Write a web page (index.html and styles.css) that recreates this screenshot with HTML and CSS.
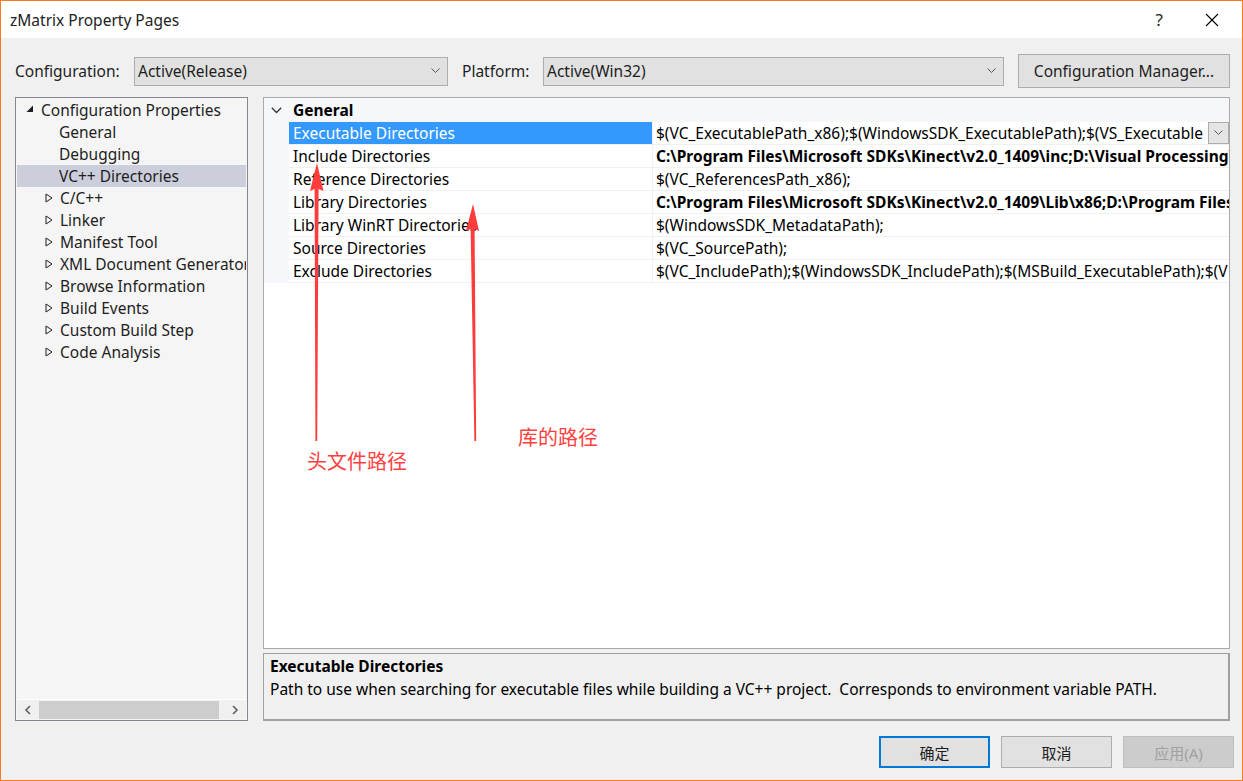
FILE: index.html
```html
<!DOCTYPE html>
<html lang="zh-CN">
<head>
  <meta charset="UTF-8" />
  <title>zMatrix Property Pages</title>
  <link rel="stylesheet" href="styles.css">
</head>
<body>
  <div class="window">

    <!-- 標題列 -->
    <header class="titlebar">
      <span class="title">zMatrix Property Pages</span>
      <span class="help">?</span>
      <svg class="close" width="14" height="14" viewBox="0 0 14 14">
        <path d="M1 1 L13 13 M13 1 L1 13" stroke="#000" stroke-width="1.1" fill="none"/>
      </svg>
    </header>

    <!-- 設定列 -->
    <div class="toolbar">
      <span class="label">Configuration:</span>
      <div class="combo combo-config">
        <span>Active(Release)</span>
        <svg class="chev" width="9" height="6" viewBox="0 0 9 6"><path d="M0.5 0.5 L4.5 4.5 L8.5 0.5" stroke="#555" fill="none"/></svg>
      </div>
      <span class="label label-platform">Platform:</span>
      <div class="combo combo-platform">
        <span>Active(Win32)</span>
        <svg class="chev" width="9" height="6" viewBox="0 0 9 6"><path d="M0.5 0.5 L4.5 4.5 L8.5 0.5" stroke="#555" fill="none"/></svg>
      </div>
      <button class="btn btn-manager">Configuration Manager...</button>
    </div>

    <div class="main">
      <!-- 樹狀清單 -->
      <div class="tree">
        <ul class="tree-list">
          <li class="node root">
            <svg class="tri" width="8" height="8" viewBox="0 0 8 8"><path d="M7 0.5 L7 7 L0.5 7 Z" fill="#1e1e1e"/></svg>
            Configuration Properties
          </li>
          <li class="node leaf">General</li>
          <li class="node leaf">Debugging</li>
          <li class="node leaf selected">VC++ Directories</li>
          <li class="node branch"><svg class="tri" width="8" height="10" viewBox="0 0 8 10"><path d="M1 1 L7 5 L1 9 Z" stroke="#1e1e1e" fill="none"/></svg>C/C++</li>
          <li class="node branch"><svg class="tri" width="8" height="10" viewBox="0 0 8 10"><path d="M1 1 L7 5 L1 9 Z" stroke="#1e1e1e" fill="none"/></svg>Linker</li>
          <li class="node branch"><svg class="tri" width="8" height="10" viewBox="0 0 8 10"><path d="M1 1 L7 5 L1 9 Z" stroke="#1e1e1e" fill="none"/></svg>Manifest Tool</li>
          <li class="node branch"><svg class="tri" width="8" height="10" viewBox="0 0 8 10"><path d="M1 1 L7 5 L1 9 Z" stroke="#1e1e1e" fill="none"/></svg>XML Document Generator</li>
          <li class="node branch"><svg class="tri" width="8" height="10" viewBox="0 0 8 10"><path d="M1 1 L7 5 L1 9 Z" stroke="#1e1e1e" fill="none"/></svg>Browse Information</li>
          <li class="node branch"><svg class="tri" width="8" height="10" viewBox="0 0 8 10"><path d="M1 1 L7 5 L1 9 Z" stroke="#1e1e1e" fill="none"/></svg>Build Events</li>
          <li class="node branch"><svg class="tri" width="8" height="10" viewBox="0 0 8 10"><path d="M1 1 L7 5 L1 9 Z" stroke="#1e1e1e" fill="none"/></svg>Custom Build Step</li>
          <li class="node branch"><svg class="tri" width="8" height="10" viewBox="0 0 8 10"><path d="M1 1 L7 5 L1 9 Z" stroke="#1e1e1e" fill="none"/></svg>Code Analysis</li>
        </ul>
        <div class="hscroll">
          <svg class="sarrow" width="8" height="10" viewBox="0 0 8 10"><path d="M6 1 L2 5 L6 9" stroke="#606060" stroke-width="1.6" fill="none"/></svg>
          <div class="track"><div class="thumb"></div></div>
          <svg class="sarrow" width="8" height="10" viewBox="0 0 8 10"><path d="M2 1 L6 5 L2 9" stroke="#606060" stroke-width="1.6" fill="none"/></svg>
        </div>
      </div>

      <div class="right">
        <!-- 屬性表格 -->
        <div class="grid">
          <div class="grid-head">
            <span class="gutter">
              <svg width="11" height="7" viewBox="0 0 11 7"><path d="M0.8 0.8 L5.5 5.5 L10.2 0.8" stroke="#333" stroke-width="1.3" fill="none"/></svg>
            </span>
            <span class="head-title">General</span>
          </div>
          <div class="row">
            <span class="gutter"></span>
            <span class="name selected">Executable Directories</span>
            <span class="value">$(VC_ExecutablePath_x86);$(WindowsSDK_ExecutablePath);$(VS_Executable</span>
            <span class="drop">
              <svg width="9" height="6" viewBox="0 0 9 6"><path d="M0.5 0.5 L4.5 4.5 L8.5 0.5" stroke="#555" fill="none"/></svg>
            </span>
          </div>
          <div class="row">
            <span class="gutter"></span>
            <span class="name">Include Directories</span>
            <span class="value bold">C:\Program Files\Microsoft SDKs\Kinect\v2.0_1409\inc;D:\Visual Processing\</span>
          </div>
          <div class="row">
            <span class="gutter"></span>
            <span class="name">Reference Directories</span>
            <span class="value">$(VC_ReferencesPath_x86);</span>
          </div>
          <div class="row">
            <span class="gutter"></span>
            <span class="name">Library Directories</span>
            <span class="value bold">C:\Program Files\Microsoft SDKs\Kinect\v2.0_1409\Lib\x86;D:\Program Files\</span>
          </div>
          <div class="row">
            <span class="gutter"></span>
            <span class="name">Library WinRT Directories</span>
            <span class="value">$(WindowsSDK_MetadataPath);</span>
          </div>
          <div class="row">
            <span class="gutter"></span>
            <span class="name">Source Directories</span>
            <span class="value">$(VC_SourcePath);</span>
          </div>
          <div class="row">
            <span class="gutter"></span>
            <span class="name">Exclude Directories</span>
            <span class="value">$(VC_IncludePath);$(WindowsSDK_IncludePath);$(MSBuild_ExecutablePath);$(V</span>
          </div>
        </div>

        <!-- 說明 -->
        <div class="desc">
          <div class="desc-title">Executable Directories</div>
          <div class="desc-text">Path to use when searching for executable files while building a VC++ project.&nbsp; Corresponds to environment variable PATH.</div>
        </div>
      </div>
    </div>

    <!-- 底部按鈕 -->
    <div class="footer">
      <button class="btn btn-ok">确定</button>
      <button class="btn">取消</button>
      <button class="btn btn-disabled">应用(A)</button>
    </div>

    <!-- 標註箭頭 -->
    <svg class="annot" width="1243" height="781" viewBox="0 0 1243 781">
      <path d="M317 163 L323.5 191 L318.6 189 L317.2 441 L315.4 441 L314.6 189 L310 191 Z" fill="#ff3c3c"/>
      <path d="M473 204 L479 231 L474.6 229 L476.2 441 L474.4 441 L470.6 229 L466 231 Z" fill="#ff3c3c"/>
    </svg>
    <span class="note note-inc">头文件路径</span>
    <span class="note note-lib">库的路径</span>
  </div>
</body>
</html>
```

FILE: styles.css
```css
/* 基本樣式 */
* {
  box-sizing: border-box;
}
body {
  margin: 0;
  font-family: "Noto Sans", "Noto Sans CJK SC", sans-serif;
  font-size: 15.5px;
  color: #1e1e1e;
  background: #f0f0f0;
}

.window {
  position: relative;
  width: 1243px;
  height: 781px;
  border: 1px solid #f47b20;
  background: #f0f0f0;
  display: flex;
  flex-direction: column;
  overflow: hidden;
}

/* 標題列 */
.titlebar {
  height: 37px;
  background: #fff;
  display: flex;
  align-items: center;
  padding-left: 9px;
  flex-shrink: 0;
}
.title {
  font-size: 15.5px;
  color: #222;
  flex: 1;
}
.help {
  font-size: 17px;
  margin-right: 42px;
}
.close {
  margin-right: 23px;
}

/* 設定列 */
.toolbar {
  display: flex;
  align-items: center;
  padding: 16px 0 0 14px;
  height: 50px;
  flex-shrink: 0;
}
.label {
  width: 119px;
  flex-shrink: 0;
}
.label-platform {
  width: 81px;
  margin-left: 14px;
}
.combo {
  height: 29px;
  background: #e1e1e1;
  border: 1px solid #adadad;
  display: flex;
  align-items: center;
  justify-content: space-between;
  padding: 0 7px 0 3px;
  flex-shrink: 0;
}
.combo-config {
  width: 314px;
}
.combo-platform {
  width: 461px;
}
.btn {
  font-family: inherit;
  font-size: 15px;
  color: #1e1e1e;
  background: #e1e1e1;
  border: 1px solid #adadad;
  height: 32px;
  width: 111px;
  padding: 0;
  flex-shrink: 0;
}
.btn-manager {
  width: 212px;
  height: 34px;
  margin-left: 14px;
  font-size: 15.5px;
}

/* 主要區塊 */
.main {
  display: flex;
  gap: 15px;
  margin-top: 9px;
  padding: 0 12px 0 14px;
  height: 624px;
  flex-shrink: 0;
}

/* 樹狀清單 */
.tree {
  width: 233px;
  flex-shrink: 0;
  border: 1px solid #828790;
  background: #f5f5f5;
  display: flex;
  flex-direction: column;
  padding: 1px;
}
.tree-list {
  list-style: none;
  margin: 0;
  padding: 0;
  flex: 1;
  overflow: hidden;
}
.node {
  height: 22px;
  line-height: 22px;
  white-space: nowrap;
  overflow: hidden;
  display: flex;
  align-items: center;
}
.tri {
  flex-shrink: 0;
}
.root {
  padding-left: 9px;
}
.root .tri {
  margin-right: 7px;
  margin-top: -2px;
}
.leaf {
  padding-left: 42px;
}
.branch {
  padding-left: 28px;
}
.branch .tri {
  margin-right: 7px;
}
.selected {
  background: #cccedb;
}
.hscroll {
  height: 20px;
  border-top: 1px solid #fff;
  display: flex;
  align-items: center;
  background: #f0f0f0;
}
.sarrow {
  margin: 0 7px 0 7px;
}
.track {
  flex: 1;
  height: 18px;
}
.thumb {
  width: 180px;
  height: 18px;
  background: #cdcdcd;
}

/* 右側 */
.right {
  flex: 1;
  min-width: 0;
  display: flex;
  flex-direction: column;
  gap: 4px;
}
.grid {
  height: 552px;
  background: #fff;
  border: 1px solid #a9a9a9;
  color: #000;
  overflow: hidden;
}
.grid-head {
  height: 24px;
  display: flex;
  align-items: center;
  background: #f5f7fa;
}
.gutter {
  width: 25px;
  height: 100%;
  flex-shrink: 0;
  background: #f5f7fa;
  display: flex;
  align-items: center;
  justify-content: center;
}
.head-title {
  font-weight: bold;
  padding-left: 4px;
}
.row {
  height: 23px;
  display: flex;
  position: relative;
}
.name {
  width: 363px;
  flex-shrink: 0;
  padding-left: 4px;
  line-height: 22px;
  border-bottom: 1px solid #f0f0f0;
  white-space: nowrap;
}
.name.selected {
  background: #3399ff;
  color: #fff;
}
.value {
  flex: 1;
  min-width: 0;
  padding-left: 3px;
  line-height: 22px;
  border-left: 1px solid #f0f0f0;
  border-bottom: 1px solid #f0f0f0;
  white-space: nowrap;
  overflow: hidden;
}
.bold {
  font-weight: bold;
}
.drop {
  position: absolute;
  right: 0;
  top: 0;
  width: 21px;
  height: 22px;
  background: #e5e5e5;
  border: 1px solid #acacac;
  display: flex;
  align-items: center;
  justify-content: center;
}

/* 說明區 */
.desc {
  height: 68px;
  border: 1px solid #a0a0a0;
  border-right-width: 2px;
  border-bottom-width: 2px;
  padding: 1px 6px;
  color: #000;
}
.desc-title {
  font-weight: bold;
  line-height: 22px;
}
.desc-text {
  line-height: 24px;
}

/* 底部按鈕 */
.footer {
  display: flex;
  justify-content: flex-end;
  gap: 11px;
  padding: 15px 8px 0 0;
}
.btn-ok {
  border: 2px solid #0078d7;
}
.btn-disabled {
  background: #cccccc;
  border-color: #bfbfbf;
  color: #a0a0a0;
}

/* 標註 */
.annot {
  position: absolute;
  left: -1px;
  top: -1px;
  pointer-events: none;
}
.note {
  position: absolute;
  font-family: "Noto Sans CJK SC", sans-serif;
  font-size: 20px;
  color: #ff4040;
  line-height: 1;
}
.note-inc {
  left: 306px;
  top: 450px;
}
.note-lib {
  left: 517px;
  top: 426px;
}
```
